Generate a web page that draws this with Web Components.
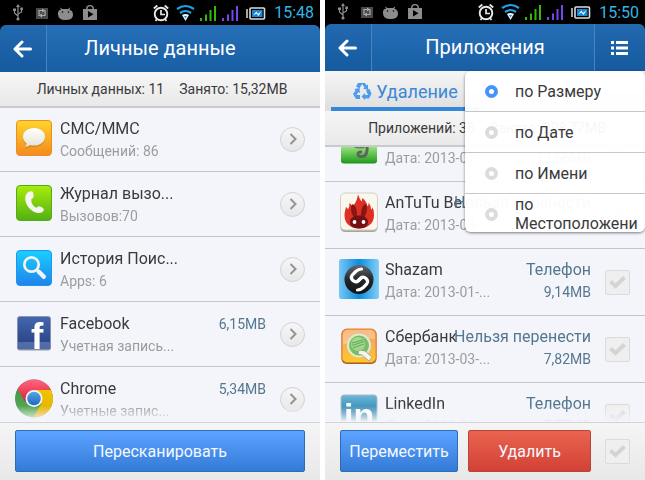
<!DOCTYPE html>
<html lang="ru">
<head>
<meta charset="utf-8">
<meta name="viewport" content="width=device-width, initial-scale=1">
<title>Личные данные</title>
<style>
    body {
        margin: 0;
        background: #fff;
        font-family: Roboto, "Noto Sans", sans-serif;
        font-size: 16px;
        color: #3a3a3c;
    }

    main {
        display: grid;
        grid-template-columns: 1fr 1fr;
        gap: 5px;
        height: 100vh;
    }
</style>
</head>
<body>
<main>
    <uc-screen scroll="1">
        <uc-status slot="top" time="15:48" style="height: 25px"></uc-status>
        <uc-header slot="top">Личные данные</uc-header>
        <uc-summary slot="top"><span>Личных данных: 11</span><span>Занято: 15,32MB</span></uc-summary>
        <uc-row icon="sms" name="СМС/ММС" note="Сообщений: 86"></uc-row>
        <uc-row icon="phone" name="Журнал вызо..." note="Вызовов:70"></uc-row>
        <uc-row icon="search" name="История Поис..." note="Apps: 6"></uc-row>
        <uc-row icon="facebook" name="Facebook" note="Учетная запись..." size="6,15MB"></uc-row>
        <uc-row icon="chrome" name="Chrome" note="Учетные запис..." size="5,34MB"></uc-row>
        <uc-footer slot="bottom">
            <uc-button>Пересканировать</uc-button>
        </uc-footer>
    </uc-screen>

    <uc-screen scroll="32">
        <uc-status slot="top" time="15:50" style="height: 24px"></uc-status>
        <uc-header slot="top" menu>Приложения</uc-header>
        <uc-tabs slot="top">Удаление</uc-tabs>
        <uc-summary slot="top"><span>Приложений: 36</span><span>Занято: 298,77MB</span></uc-summary>
        <uc-row checkable icon="evernote" name="Evernote" note="Дата: 2013-01-..." place="Телефон" size="13,66MB"></uc-row>
        <uc-row checkable icon="antutu" name="AnTuTu Be..." note="Дата: 2013-03-..." place="Нельзя перенести"></uc-row>
        <uc-row checkable icon="shazam" name="Shazam" note="Дата: 2013-01-..." place="Телефон" size="9,14MB"></uc-row>
        <uc-row checkable icon="sber" name="Сбербанк" note="Дата: 2013-03-..." place="Нельзя перенести" size="7,82MB"></uc-row>
        <uc-row checkable icon="linkedin" name="LinkedIn" note="Дата: 2013-02-..." place="Телефон" size="7,77MB"></uc-row>
        <uc-footer slot="bottom" split>
            <uc-button>Переместить</uc-button>
            <uc-button danger>Удалить</uc-button>
            <uc-check label="Выбрать все"></uc-check>
        </uc-footer>
    </uc-screen>
</main>

<script>
"use strict";

const ICONS = {
    sms: `
        <linearGradient id="g" x2="0" y2="1"><stop stop-color="#ffd52b"/><stop offset="1" stop-color="#f28a20"/></linearGradient>
        <linearGradient id="w" x2="0" y2="1"><stop stop-color="#fff"/><stop offset="1" stop-color="#e4e2da"/></linearGradient>
        <rect x="2.5" y="2.5" width="35" height="35" rx="3.5" fill="url(#g)" stroke="#ef8d25"/>
        <path d="M20 10.500c6.300 0 11 3.800 11 8.800s-4.700 8.800-11 8.800q-2 0-3.800-.5-2.200 1.800-5.400 2 1.800-1.500 1.800-3.700Q9 23.200 9 19.300c0-5 4.700-8.800 11-8.800z" fill="#b96a10" opacity=".5" transform="translate(0 .8)"/>
        <path d="M20 10c6.300 0 11 3.800 11 8.800s-4.700 8.800-11 8.800q-2 0-3.800-.5-2.200 1.800-5.400 2 1.800-1.500 1.800-3.700Q9 22.700 9 18.800c0-5 4.700-8.800 11-8.800z" fill="url(#w)"/>`,
    phone: `
        <linearGradient id="g" x2="0" y2="1"><stop stop-color="#a9ec0c"/><stop offset="1" stop-color="#52b012"/></linearGradient>
        <rect x="2.500" y="2.500" width="35" height="35" rx="3.500" fill="url(#g)" stroke="#4fae15"/>
        <path d="M17.500 8.300c1.300 0 2 1.500 2.100 3.600.1 2.300-.3 3.300-2.200 4-.6 3.900 1.700 7.500 5.300 8.800 1.100-1.500 2.200-1.800 4.100-.9 2.200 1 3.500 2.300 3 3.500-.8 2-3.500 3.200-6.300 2.600C16.500 28.500 11 21.600 11.200 15.200c.1-3.700 2.700-6.900 6.300-6.900z" fill="#f4f6ef"/>`,
    search: `
        <linearGradient id="g" x2="0" y2="1"><stop stop-color="#19d0ff"/><stop offset="1" stop-color="#1f83ea"/></linearGradient>
        <rect x="2.500" y="2.500" width="35" height="35" rx="3.500" fill="url(#g)" stroke="#2493ee"/>
        <g fill="none" stroke="#f2f4f6"><circle cx="17.500" cy="16.500" r="7.200" stroke-width="2.700"/>
        <path d="M22.500 21.500l2 2" stroke-width="2.500"/><path d="M24.800 23.800l5 5" stroke-width="4.400" stroke-linecap="round"/></g>`,
    facebook: `
        <linearGradient id="g" x2="0" y2="1"><stop stop-color="#4467ae"/><stop offset="1" stop-color="#263d80"/></linearGradient>
        <rect x="3" y="3.500" width="34" height="34" rx="3" fill="#9a9da6"/>
        <rect x="3.500" y="3.500" width="33" height="33" rx="2.500" fill="url(#g)" stroke="#8e97b1" stroke-width=".8"/>
        <path d="M4 29h32v5q0 2-2 2H6q-2 0-2-2z" fill="#7894c9" opacity=".5"/>
        <text x="17" y="36" font-family="Liberation Sans" font-weight="700" font-size="37" fill="#fff">f</text>`,
    chrome: `
        <linearGradient id="r" x2="0" y2="1"><stop stop-color="#ff6680"/><stop offset="1" stop-color="#dc1f37"/></linearGradient>
        <linearGradient id="y" x2="0" y2="1"><stop stop-color="#f2c400"/><stop offset="1" stop-color="#e0ae00"/></linearGradient>
        <linearGradient id="n" x2="0" y2="1"><stop stop-color="#3c8c40"/><stop offset="1" stop-color="#5bb058"/></linearGradient>
        <linearGradient id="b" x2="0" y2="1"><stop stop-color="#5ba6e8"/><stop offset="1" stop-color="#2167bd"/></linearGradient>
        <circle cx="20" cy="20.500" r="19" fill="url(#n)"/>
        <path d="M20 12h17a19 19 0 0 1-18 27.500l8.500-14z" fill="url(#y)"/>
        <path d="M3.500 11a19 19 0 0 1 33.500 1H20l-8.500 12z" fill="url(#r)"/>
        <circle cx="20" cy="20.500" r="8.500" fill="#f3f5f7"/><circle cx="20" cy="20.500" r="6.800" fill="url(#b)"/>`,
    evernote: `
        <linearGradient id="g" x2="0" y2="1"><stop offset=".4" stop-color="#e8f8e2"/><stop offset=".6" stop-color="#8fdb74"/><stop offset="1" stop-color="#22a01c"/></linearGradient>
        <rect x="2" y="3" width="36" height="35.500" rx="3" fill="#238d20"/>
        <rect x="2" y="2" width="36" height="35.500" rx="3" fill="url(#g)"/>
        <path d="M12 8h15v13q-1 3-6 2.500-7 0-9-4z" fill="#6c7a6d"/>
        <path d="M28 20q1 11-4.500 11.500-4.500.5-4.500-2.500 0-2.500 4-2" fill="none" stroke="#5d655f" stroke-width="3"/>`,
    antutu: `
        <rect x="1.500" y="2" width="37" height="38" rx="4.500" fill="#aaa69a"/>
        <rect x="1.500" y="1" width="37" height="37" rx="4.500" fill="#f9f7ee" stroke="#d2cfc5"/>
        <path d="M20 36.500C11 36.500 5.500 31 5.500 23.500c0-3.500 1-5.500 1.500-8.500q1.500.7 2 2.500 1.500-2 1.500-6.500 2 1 2.500 3.500 4.500-3 6-12 1.500 4.500 3.500 7 1-1.500.5-3.500 4.500 2.500 5.500 8.500 1.500-1.500 1-4 2.500 3 2.500 7 1.500-.5 1.500-2.500Q35 18 35 23.500c0 7.500-6 13-15 13z" fill="#de3022"/>
        <ellipse cx="15" cy="19" rx="2.700" ry="7" fill="#8a1613" transform="rotate(-12 15 19)"/>
        <ellipse cx="25" cy="19" rx="2.700" ry="7" fill="#8a1613" transform="rotate(12 25 19)"/>
        <path d="M20 23.500c5 0 9 2.500 9 6.500q0 6.500-9 6.500T11 30c0-4 4-6.500 9-6.500z" fill="#741113"/>
        <circle cx="15.500" cy="30" r="1.900" fill="#fff"/><circle cx="24.500" cy="30" r="1.900" fill="#fff"/>`,
    shazam: `
        <linearGradient id="g"><stop stop-color="#79c7f2"/><stop offset=".5" stop-color="#0b8ddf"/><stop offset="1" stop-color="#84cff5"/></linearGradient>
        <linearGradient id="k" x2="0" y2="1"><stop stop-color="#63666a"/><stop offset=".5" stop-color="#25272a"/><stop offset="1" stop-color="#111"/></linearGradient>
        <rect width="40" height="40" rx="2.500" fill="url(#g)"/>
        <circle cx="20" cy="20.500" r="14.500" fill="url(#k)"/>
        <g fill="none" stroke="#fff" stroke-width="3.200" stroke-linecap="round">
        <path d="M22.500 10q-3 0-5.800 2.500l-3 3q-2.800 3.200.3 6t6.200-.3l2.800-2.800"/>
        <path d="M18.500 31q3 0 5.800-2.500l3-3q2.800-3.200-.3-6t-6.200.3L18 22.600"/></g>`,
    sber: `
        <linearGradient id="g" x2="0" y2="1"><stop stop-color="#f2a052"/><stop offset=".45" stop-color="#f6ae58"/><stop offset="1" stop-color="#ffc928"/></linearGradient>
        <rect x="2.500" y="3" width="35" height="35" rx="5" fill="#a36122"/>
        <rect x="3" y="3" width="34" height="33.500" rx="5" fill="url(#g)" stroke="#e68129"/>
        <path d="M4 8q1-4 5-4h22q4 0 5 4v5q-16-2-32 6z" fill="#fff" opacity=".3"/>
        <circle cx="20" cy="19.500" r="12" fill="#deebcc"/><circle cx="20" cy="19.500" r="10" fill="#79bd68"/>
        <circle cx="19" cy="18" r="7" fill="#a1d88c"/>
        <path d="M13 17l11-3M13 19.500l12-4M14 22l11-4" stroke="#5fa65a" stroke-width="1"/>
        <path d="M20 24l6 1 7 6-3 4-7-6-4-1z" fill="#f4f4f0" stroke="#8f9a80" stroke-width=".7"/>`,
    linkedin: `
        <linearGradient id="g" x2="0" y2="1"><stop stop-color="#6cb8d8"/><stop offset=".5" stop-color="#2c83ae"/><stop offset="1" stop-color="#17668f"/></linearGradient>
        <rect x="2" y="2" width="36" height="36" rx="3" fill="url(#g)" stroke="#a9bac3"/>
        <text x="5" y="34" font-family="Liberation Sans" font-weight="700" font-size="34" fill="#fff">in</text>`
};

class Screen extends HTMLElement {
    constructor() {
        super();
        this.attachShadow({ mode: "open" });
        this.shadowRoot.innerHTML = `
            <style>
                :host {
                    display: flex;
                    flex-direction: column;
                    position: relative;
                    min-width: 0;
                    min-height: 0;
                    background: #f4f5fa;
                }

                #list {
                    flex: 1;
                    min-height: 0;
                    overflow: hidden;
                    -webkit-mask-image: linear-gradient(to top, transparent, #000 16px);
                    mask-image: linear-gradient(to top, transparent, #000 16px);
                }
            </style>
            <slot name="top"></slot>
            <section id="list"><slot></slot></section>
            <slot name="bottom"></slot>
        `;
    }
    connectedCallback() {
        // rows are upgraded after the screen, so wait for them before scrolling
        customElements.whenDefined("uc-check").then(() => {
            this.shadowRoot.querySelector("#list").scrollTop = Number(this.getAttribute("scroll"));
        });
    }
}

class StatusBar extends HTMLElement {
    constructor() {
        super();
        this.attachShadow({ mode: "open" });
        this.shadowRoot.innerHTML = `
            <style>
                :host {
                    display: flex;
                    align-items: center;
                    justify-content: space-between;
                    padding: 0 6px 0 10px;
                    background: #000;
                    color: #33b5e5;
                }

                svg {
                    display: block;
                }

                div {
                    display: flex;
                    align-items: center;
                    gap: 8px;
                }
            </style>
            <svg width="90" height="20" viewBox="10 0 90 20" fill="#8d8d8d">
                <path d="M18 3v13M18 13l-3.500-3V7M18 11l3.500-2V6" stroke="#8d8d8d" stroke-width="1.200" fill="none"/>
                <path d="M18 1l2 3h-4zM13 5.500h3v2.500h-3zM20.300 4.500h2.600V7h-2.600z"/><circle cx="18" cy="16" r="1.600"/>
                <path d="M36 5h12v11H36z" fill="#4a4a4a"/><path d="M44 7.500h-5v5h2m-1 0h5v-5h-2" stroke="#aaa" stroke-width="1.200" fill="none"/>
                <path d="M42 5.500l3 2-3 2zM42 10.500v4l-3-2z" fill="#aaa"/>
                <path d="M58 10q0-3 3-3.300L60 4.500l2.500 1.500h5.500l2.300-1.700-.8 2.400Q73 7.500 73 12q0 5-7.500 5T58 11z"/>
                <circle cx="62.500" cy="9" r=".8" fill="#000"/><circle cx="68.500" cy="9" r=".8" fill="#000"/>
                <path d="M83 6h3q0-4 4-4t4 4h3v11H83zM87.500 6h5Q92.500 3.300 90 3.300T87.500 6z" fill-rule="evenodd"/><path d="M88 8v6.500l5.500-3.200z" fill="#000"/>
            </svg>
            <div>
                <svg width="113" height="20" viewBox="153 0 113 20" fill="none">
                    <circle cx="161" cy="11" r="6.300" stroke="#e8e8e8" stroke-width="1.900"/>
                    <path d="M161 7v4.500h4M153.800 5.500l3.500-3M168.200 5.500l-3.500-3M157 16l-1.500 2M165 16l1.500 2" stroke="#e8e8e8" stroke-width="1.700"/>
                    <path d="M177 6q8.500-6 17 0M180 10q5.500-4 11 0" stroke="#1fa1e6" stroke-width="2.200"/>
                    <path d="M182 12q3.500-2 7 0l-3.500 6z" fill="#e8f5ff"/><path d="M184 13h3l-1.500 2.500z" fill="#2489c8"/>
                    <path d="M201 15v3M206 11.500V18M210.500 7v11M215 3v15" stroke="#36b80d" stroke-width="2"/>
                    <path d="M223 15v3M228 11.500V18M232.500 7v11M237 3v15" stroke="#7545ef" stroke-width="2"/>
                    <path d="M247 6v9" stroke="#ddd" stroke-width="1.500"/><rect x="250" y="5" width="14.500" height="11" rx="1" stroke="#ddd" stroke-width="1.600"/>
                    <path d="M252 7h10.500v7H252z" fill="#1687d6"/><path d="M253 12.500l3.500-4 1.500 2.500 3.500-3-3 5-2-2.500z" fill="#fff"/>
                </svg>
                <time></time>
            </div>
        `;
        this.shadowRoot.querySelector("time").textContent = this.getAttribute("time");
    }
}

class Header extends HTMLElement {
    constructor() {
        super();
        this.attachShadow({ mode: "open" });
        this.shadowRoot.innerHTML = `
            <style>
                :host {
                    display: block;
                    background: #000;
                }

                header {
                    display: grid;
                    grid-template-columns: 51px 1fr 51px;
                    height: 47px;
                    border-radius: 6px 6px 0 0;
                    background: linear-gradient(#266fb6, #185fa5);
                    overflow: hidden;
                    color: #fff;
                }

                h1 {
                    margin: 0;
                    font-size: 20px;
                    font-weight: 400;
                    line-height: 47px;
                    text-align: center;
                    white-space: nowrap;
                }

                button {
                    display: grid;
                    place-items: center;
                    padding: 0;
                    border: 0;
                    background: rgba(0, 40, 100, 0.08);
                    color: inherit;
                }

                #back {
                    width: 47px;
                    border-right: 1px solid #4785c0;
                }

                #menu {
                    border-left: 1px solid #4785c0;
                }

                :host(:not([menu])) #menu {
                    display: none;
                }
            </style>
            <header>
                <button id="back" aria-label="Назад">
                    <svg width="20" height="18" viewBox="0 0 20 18" fill="none" stroke="#fff" stroke-width="3" stroke-linejoin="round" stroke-linecap="round">
                        <path d="M9 2L2 9l7 7M3 9h14.500"/>
                    </svg>
                </button>
                <h1><slot></slot></h1>
                <button id="menu" aria-label="Сортировка">
                    <svg width="18" height="14" viewBox="0 0 18 14" fill="#fff">
                        <path d="M0 0h3v3H0zM0 5.500h3v3H0zM0 11h3v3H0zM5 0h12v3H5zM5 5.500h12v3H5zM5 11h12v3H5z"/>
                    </svg>
                </button>
            </header>
            <uc-sort-menu></uc-sort-menu>
        `;
        if (!this.hasAttribute("menu")) {
            this.shadowRoot.querySelector("uc-sort-menu").remove();
        }
        else {
            this.style.position = "relative";
        }
    }
}

class SortMenu extends HTMLElement {
    constructor() {
        super();
        this.attachShadow({ mode: "open" });
        this.shadowRoot.innerHTML = `
            <style>
                :host {
                    position: absolute;
                    top: 100%;
                    right: 0;
                    z-index: 10;
                    box-sizing: border-box;
                    width: 180px;
                    height: 161px;
                    overflow: hidden;
                    border-radius: 6px;
                    background: rgba(255, 255, 255, 0.96);
                    box-shadow: 0 1px 3px rgba(0, 0, 0, 0.5);
                    color: #3a3a3c;
                }

                label {
                    display: grid;
                    grid-template-columns: 14px 1fr;
                    column-gap: 16px;
                    align-items: center;
                    height: 40px;
                    padding-left: 20px;
                    border-bottom: 1px solid #c6c7c9;
                    line-height: 19px;
                }

                label:last-child {
                    border: 0;
                }

                input {
                    appearance: none;
                    box-sizing: border-box;
                    width: 13px;
                    height: 13px;
                    margin: 0;
                    border: 4px solid #dcdcdc;
                    border-radius: 50%;
                    background: #fff;
                }

                input:checked {
                    border-color: #4495f7;
                }
            </style>
            <label><input type="radio" name="sort" checked><span>по Размеру</span></label>
            <label><input type="radio" name="sort"><span>по Дате</span></label>
            <label><input type="radio" name="sort"><span>по Имени</span></label>
            <label><input type="radio" name="sort"><span>по Местоположени</span></label>
        `;
    }
}

class Tabs extends HTMLElement {
    constructor() {
        super();
        this.attachShadow({ mode: "open" });
        this.shadowRoot.innerHTML = `
            <style>
                :host {
                    display: grid;
                    grid-template-columns: 1fr 1fr;
                    height: 40px;
                    padding: 0 6px;
                    background: linear-gradient(#f6f6f6, #dedede);
                }

                button {
                    display: flex;
                    align-items: center;
                    justify-content: center;
                    gap: 4px;
                    margin-right: 6px;
                    padding: 0;
                    border: 0;
                    border-bottom: 4px solid #3587dc;
                    background: none;
                    color: #3a88d6;
                    font: inherit;
                    font-size: 18px;
                }

                svg {
                    margin-top: 4px;
                }

                span {
                    margin-top: 4px;
                }
            </style>
            <button>
                <svg width="20" height="20" viewBox="0 0 20 20" fill="#4e9cf2">
                    <path d="M6 2h7l1.500 2.500L16 3.500V9l-5-1.500 1.500-1L10 3 7.500 7.500 4 5.500z"/>
                    <path d="M2.500 8l5-1L8 12l-1.500-1L4.500 14H8v4H4L1 13l2.500-3.500z"/>
                    <path d="M14 9.500l3.500-1.700 2 5-2.500 4.700h-4V19L9.500 15.500 13 12v2h3z"/>
                </svg>
                <span><slot></slot></span>
            </button>
        `;
    }
}

class Summary extends HTMLElement {
    constructor() {
        super();
        this.attachShadow({ mode: "open" });
        this.shadowRoot.innerHTML = `
            <style>
                :host {
                    display: flex;
                    justify-content: center;
                    gap: 15px;
                    padding-left: 4px;
                    border-bottom: 2px solid #c9cacb;
                    background: linear-gradient(#f6f6f6, #e9e9e9);
                    font-size: 14px;
                    line-height: 34px;
                    white-space: nowrap;
                }
            </style>
            <slot></slot>
        `;
    }
}

class Row extends HTMLElement {
    constructor() {
        super();
        this.attachShadow({ mode: "open" });
        this.shadowRoot.innerHTML = `
            <style>
                :host {
                    display: flex;
                    box-sizing: border-box;
                    height: 65px;
                    padding: 0 15px 0 14px;
                    border-bottom: 1px solid #c4c5c8;
                    line-height: 22px;
                    white-space: nowrap;
                    --inset: 11px;
                }

                :host([checkable]) {
                    height: 67px;
                    --inset: 10px;
                }

                #icon {
                    flex: none;
                    width: 40px;
                    height: 40px;
                    margin: var(--inset) 6px 0 0;
                    overflow: visible;
                }

                #body {
                    display: grid;
                    flex: 1;
                    min-width: 0;
                    margin-right: 14px;
                    padding-top: var(--inset);
                }

                /* name and place share one cell, a long place runs over the name */
                #text, #side {
                    grid-area: 1 / 1;
                    display: grid;
                    grid-template-rows: 22px 22px;
                }

                #note {
                    color: #9b9ca0;
                    font-size: 14px;
                }

                #side {
                    justify-self: end;
                    text-align: right;
                    color: #54778f;
                }

                #size {
                    font-size: 14px;
                }

                #more {
                    align-self: center;
                    display: grid;
                    place-items: center;
                    width: 25px;
                    height: 25px;
                    padding: 0;
                    border: 1px solid #d0d1d4;
                    border-radius: 50%;
                    background: linear-gradient(#f6f6f6, #e8e8e8);
                }

                uc-check {
                    align-self: center;
                }
            </style>
            <svg id="icon" viewBox="0 0 40 40"></svg>
            <div id="body">
                <div id="text"><span id="name"></span><span id="note"></span></div>
                <div id="side"></div>
            </div>
        `;
        const root = this.shadowRoot;
        const name = this.getAttribute("name");
        root.querySelector("#icon").innerHTML = ICONS[this.getAttribute("icon")];
        root.querySelector("#name").textContent = name;
        root.querySelector("#note").textContent = this.getAttribute("note");
        const side = root.querySelector("#side");
        ["place", "size"].forEach((key) => {
            if (this.hasAttribute(key)) {
                const span = document.createElement("span");
                span.id = key;
                span.textContent = this.getAttribute(key);
                side.append(span);
            }
        });
        if (this.hasAttribute("checkable")) {
            const check = document.createElement("uc-check");
            check.setAttribute("label", name);
            root.append(check);
        }
        else {
            const more = document.createElement("button");
            more.id = "more";
            more.setAttribute("aria-label", name);
            more.innerHTML = `
                <svg width="8" height="12" viewBox="0 0 8 12" fill="none" stroke="#929498" stroke-width="2"><path d="M1.500 1l5 5-5 5"/></svg>
            `;
            root.append(more);
        }
    }
}

class Check extends HTMLElement {
    constructor() {
        super();
        this.attachShadow({ mode: "open" });
        this.shadowRoot.innerHTML = `
            <style>
                :host {
                    display: block;
                }

                label {
                    display: grid;
                    place-items: center;
                }

                input {
                    appearance: none;
                    grid-area: 1 / 1;
                    box-sizing: border-box;
                    width: 25px;
                    height: 25px;
                    margin: 0;
                    border: 1px solid #dadbdd;
                    border-radius: 2px;
                    background: #efeff0;
                }

                svg {
                    grid-area: 1 / 1;
                    pointer-events: none;
                }
            </style>
            <label>
                <input type="checkbox">
                <svg width="17" height="13" viewBox="0 0 17 13" fill="none" stroke="#d3d4d6" stroke-width="4"><path d="M1.500 5.500l5 4.500 9-8.500"/></svg>
            </label>
        `;
    }
    connectedCallback() {
        this.shadowRoot.querySelector("input").setAttribute("aria-label", this.getAttribute("label"));
    }
}

class Footer extends HTMLElement {
    constructor() {
        super();
        this.attachShadow({ mode: "open" });
        this.shadowRoot.innerHTML = `
            <style>
                :host {
                    display: grid;
                    align-items: center;
                    padding: 7px 15px 8px;
                    border-top: 1px solid #d2d4da;
                    background: linear-gradient(#f5f5f5, #e8e8e8);
                }

                :host([split]) {
                    grid-template-columns: 118px 1fr 29px;
                    column-gap: 10px;
                }

                ::slotted(uc-check) {
                    justify-self: end;
                }
            </style>
            <slot></slot>
        `;
    }
}

class Button extends HTMLElement {
    constructor() {
        super();
        this.attachShadow({ mode: "open" });
        this.shadowRoot.innerHTML = `
            <style>
                :host {
                    display: block;
                }

                button {
                    width: 100%;
                    height: 42px;
                    padding: 0;
                    border: 1px solid #2e6cb8;
                    border-radius: 2px;
                    background: linear-gradient(#5ca4ff, #347bd8);
                    color: #f4f8ff;
                    font: inherit;
                }

                :host([danger]) button {
                    border-color: #b8453a;
                    background: linear-gradient(#e9644f, #d34136);
                }
            </style>
            <button><slot></slot></button>
        `;
    }
}

customElements.define("uc-screen", Screen);
customElements.define("uc-status", StatusBar);
customElements.define("uc-header", Header);
customElements.define("uc-sort-menu", SortMenu);
customElements.define("uc-tabs", Tabs);
customElements.define("uc-summary", Summary);
customElements.define("uc-row", Row);
customElements.define("uc-footer", Footer);
customElements.define("uc-button", Button);
customElements.define("uc-check", Check);
</script>
</body>
</html>
